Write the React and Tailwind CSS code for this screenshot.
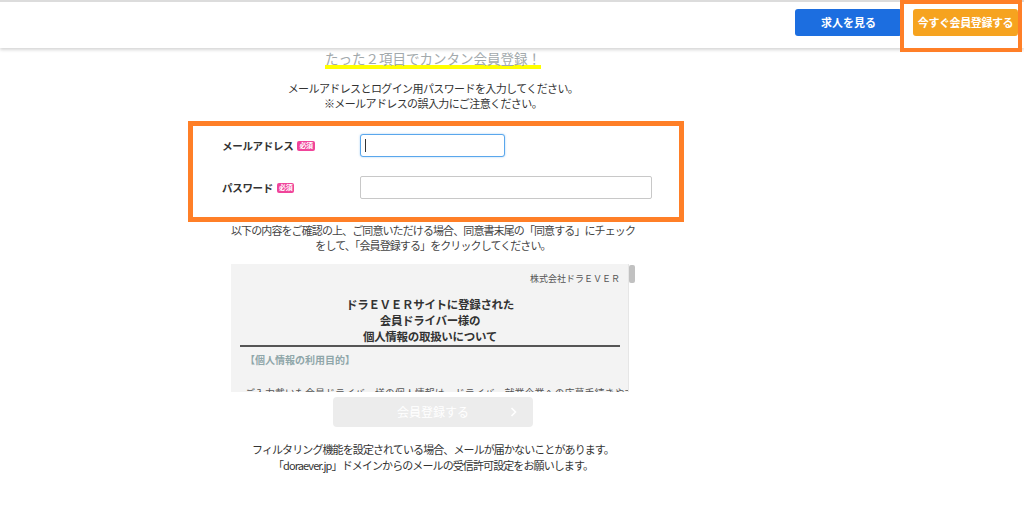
import React from 'react';

const jp = { fontFamily: '"Noto Sans CJK JP", "Noto Sans", sans-serif' };

function Badge() {
  return (
    <span className="ml-[4px] inline-flex h-[10px] items-center rounded-[2px] bg-[#f0449a] px-[2px] text-[7px] leading-none text-white">
      必須
    </span>
  );
}

function Header() {
  return (
    <header className="relative z-10 flex h-[48px] items-start justify-end gap-[11px] border-t-[2px] border-[#dcdcdc] bg-white pr-[6px] pt-[7px] shadow-[0_2px_3px_rgba(0,0,0,0.16)]">
      <button className="flex h-[27px] w-[107px] items-center justify-center rounded-[3px] bg-[#1c6ee0] text-[11px] font-bold text-white">
        求人を見る
      </button>
      <button className="flex h-[27px] w-[105px] items-center justify-center rounded-[3px] bg-[#f6a31f] text-[11px] font-bold tracking-[-0.4px] text-white">
        今すぐ会員登録する
      </button>
      {/* annotation frame */}
      <div className="absolute right-[2px] top-[-2px] h-[52px] w-[122px] border-[4px] border-[#ff7f27]" />
    </header>
  );
}

function TermsBox() {
  return (
    <div className="mt-[11px] flex h-[128px] w-[404px] bg-[#f3f3f3]">
      <div className="flex-1 overflow-hidden pl-[9px] pr-[8px]">
        <p className="pt-[9px] text-right text-[9px] leading-[12px] text-[#555]">株式会社ドラＥＶＥＲ</p>
        <h3 className="mt-[11px] text-center text-[11.5px] font-bold leading-[16px] tracking-[-0.3px] text-[#333]">
          ドラＥＶＥＲサイトに登録された
          <br />
          会員ドライバー様の
          <br />
          個人情報の取扱いについて
        </h3>
        <div className="mt-[1px] h-[2px] bg-[#555]" />
        <p className="mt-[7px] pl-[5px] text-[10px] font-bold leading-[12px] text-[#8fa6a9]">【個人情報の利用目的】</p>
        <p className="mt-[20px] whitespace-nowrap pl-[5px] text-[10px] leading-[14px] text-[#555]">
          ご入力戴いた会員ドライバー様の個人情報は、ドライバー就業企業への応募手続きや支援等の会員サービスに利用します。
        </p>
      </div>
      <div className="flex w-[7px] flex-col border-l border-[#e6e6e6] bg-white">
        <div className="mt-[1px] h-[18px] rounded-[2px] bg-[#c1c1c1]" />
      </div>
    </div>
  );
}

export default function App() {
  return (
    <div className="min-h-[514px] bg-white text-[#333]" style={jp}>
      <Header />
      <main className="flex w-[866px] flex-col items-center">
        <h2 className="mt-[3px] inline-block border-b-[4px] border-[#ffff00] text-[13.5px] leading-[14px] text-[#a2a9ac]">
          たった２項目でカンタン会員登録！
        </h2>
        <p className="mt-[12px] whitespace-nowrap text-center text-[11px] leading-[15px] tracking-[-0.6px]">
          メールアドレスとログイン用パスワードを入力してください。
          <br />
          ※メールアドレスの誤入力にご注意ください。
        </p>

        <div className="ml-[6px] mt-[10px] flex h-[101px] w-[496px] flex-col gap-[19px] border-[5px] border-[#ff7f27] pl-[29px] pt-[8px]">
          <div className="flex items-center">
            <label className="flex w-[138px] items-center text-[10.5px] font-bold tracking-[-0.3px] text-[#333]">
              メールアドレス
              <Badge />
            </label>
            <div className="flex h-[23px] w-[145px] items-center rounded-[3px] border border-[#5aa7ec] bg-white px-[4px] shadow-[0_0_2px_rgba(90,167,236,0.6)]">
              <div className="h-[13px] w-[1px] bg-[#333]" />
            </div>
          </div>
          <div className="flex items-center">
            <label className="flex w-[138px] items-center text-[10.5px] font-bold tracking-[-0.3px] text-[#333]">
              パスワード
              <Badge />
            </label>
            <input type="password" className="h-[23px] w-[292px] rounded-[2px] border border-[#c8c8c8] bg-white outline-none" />
          </div>
        </div>

        <p className="mt-[1px] whitespace-nowrap text-center text-[11px] leading-[15px] tracking-[-0.9px] text-[#444]">
          以下の内容をご確認の上、ご同意いただける場合、同意書末尾の「同意する」にチェック
          <br />
          をして、「会員登録する」をクリックしてください。
        </p>

        <TermsBox />

        <button className="relative mt-[5px] flex h-[30px] w-[200px] items-center justify-center rounded-[4px] bg-[#ececec] text-[12px] text-white">
          会員登録する
          <svg className="absolute right-[16px] top-[10px]" width="7" height="10" viewBox="0 0 7 10">
            <path d="M1.5 1 L5.5 5 L1.5 9" fill="none" stroke="#fff" strokeWidth="1.6" />
          </svg>
        </button>

        <p className="mt-[14px] whitespace-nowrap text-center text-[11px] leading-[16px] tracking-[-0.9px] text-[#333]">
          フィルタリング機能を設定されている場合、メールが届かないことがあります。
          <br />
          「doraever.jp」ドメインからのメールの受信許可設定をお願いします。
        </p>
      </main>
    </div>
  );
}
